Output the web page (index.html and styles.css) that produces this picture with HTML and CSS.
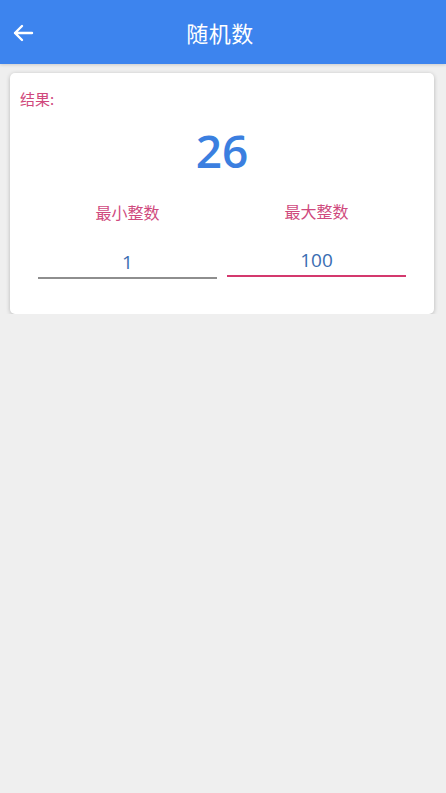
FILE: index.html
```html
<!DOCTYPE html>
<html lang="zh">
<head>
<meta charset="utf-8">
<title>随机数</title>
<link rel="stylesheet" href="styles.css">
</head>
<body>
<header class="appbar">
  <span class="back">
    <svg width="22" height="18" viewBox="0 0 22 18"><path d="M20 9H3M10 2L3 9l7 7" fill="none" stroke="#fff" stroke-width="2.4" stroke-linecap="round" stroke-linejoin="round"/></svg>
  </span>
  <h1 class="title">随机数</h1>
</header>
<main class="content">
  <section class="card">
    <div class="result-label">结果:</div>
    <div class="result">26</div>
    <div class="fields">
      <div class="field">
        <div class="field-label">最小整数</div>
        <div class="field-input">1</div>
      </div>
      <div class="field active">
        <div class="field-label">最大整数</div>
        <div class="field-input">100</div>
      </div>
    </div>
  </section>
</main>
</body>
</html>
```
FILE: styles.css
```css
html, body {
  margin: 0;
  padding: 0;
  background: #efefef;
  font-family: "Noto Sans CJK SC", "Noto Sans", sans-serif;
}
.appbar {
  height: 64px;
  background: #3d84ee;
  display: flex;
  align-items: center;
  justify-content: center;
  position: relative;
  box-shadow: 0 1px 3px rgba(0,0,0,0.15);
}
.back {
  position: absolute;
  left: 12px;
  top: 24px;
  display: flex;
}
.title {
  margin: 0 6px 0 0;
  color: #fff;
  font-size: 22px;
  font-weight: 400;
  letter-spacing: 0.5px;
}
.content {
  padding: 9px 12px 0 10px;
}
.card {
  background: #fff;
  border-radius: 5px;
  box-shadow: 0 1px 4px rgba(0,0,0,0.24);
  padding: 16px 0 30px;
  height: 195px;
}
.result-label {
  color: #d0487c;
  font-size: 15px;
  line-height: 20px;
  padding-left: 10px;
}
.result {
  color: #3b7fe0;
  font-family: "Open Sans", "Noto Sans", sans-serif;
  font-weight: 600;
  font-size: 46px;
  line-height: 50px;
  text-align: center;
  margin-top: 16px;
}
.fields {
  display: grid;
  grid-template-columns: 179px 179px;
  column-gap: 10px;
  padding-left: 28px;
  margin-top: 26px;
}
.field {
  display: flex;
  flex-direction: column;
  align-items: center;
}
.field-label {
  color: #cf4a7e;
  font-size: 16px;
  line-height: 22px;
}
.field-input {
  width: 100%;
  text-align: center;
  color: #3a6db2;
  font-family: "Open Sans", "Noto Sans", sans-serif;
  font-size: 19px;
  line-height: 26px;
  margin-top: 26px;
  padding-bottom: 2px;
  border-bottom: 2px solid #8e8e8e;
}
.active .field-label {
  position: relative;
  top: -1px;
}
.active .field-input {
  border-bottom: 2px solid #d4396e;
  position: relative;
  top: -2px;
}
```
